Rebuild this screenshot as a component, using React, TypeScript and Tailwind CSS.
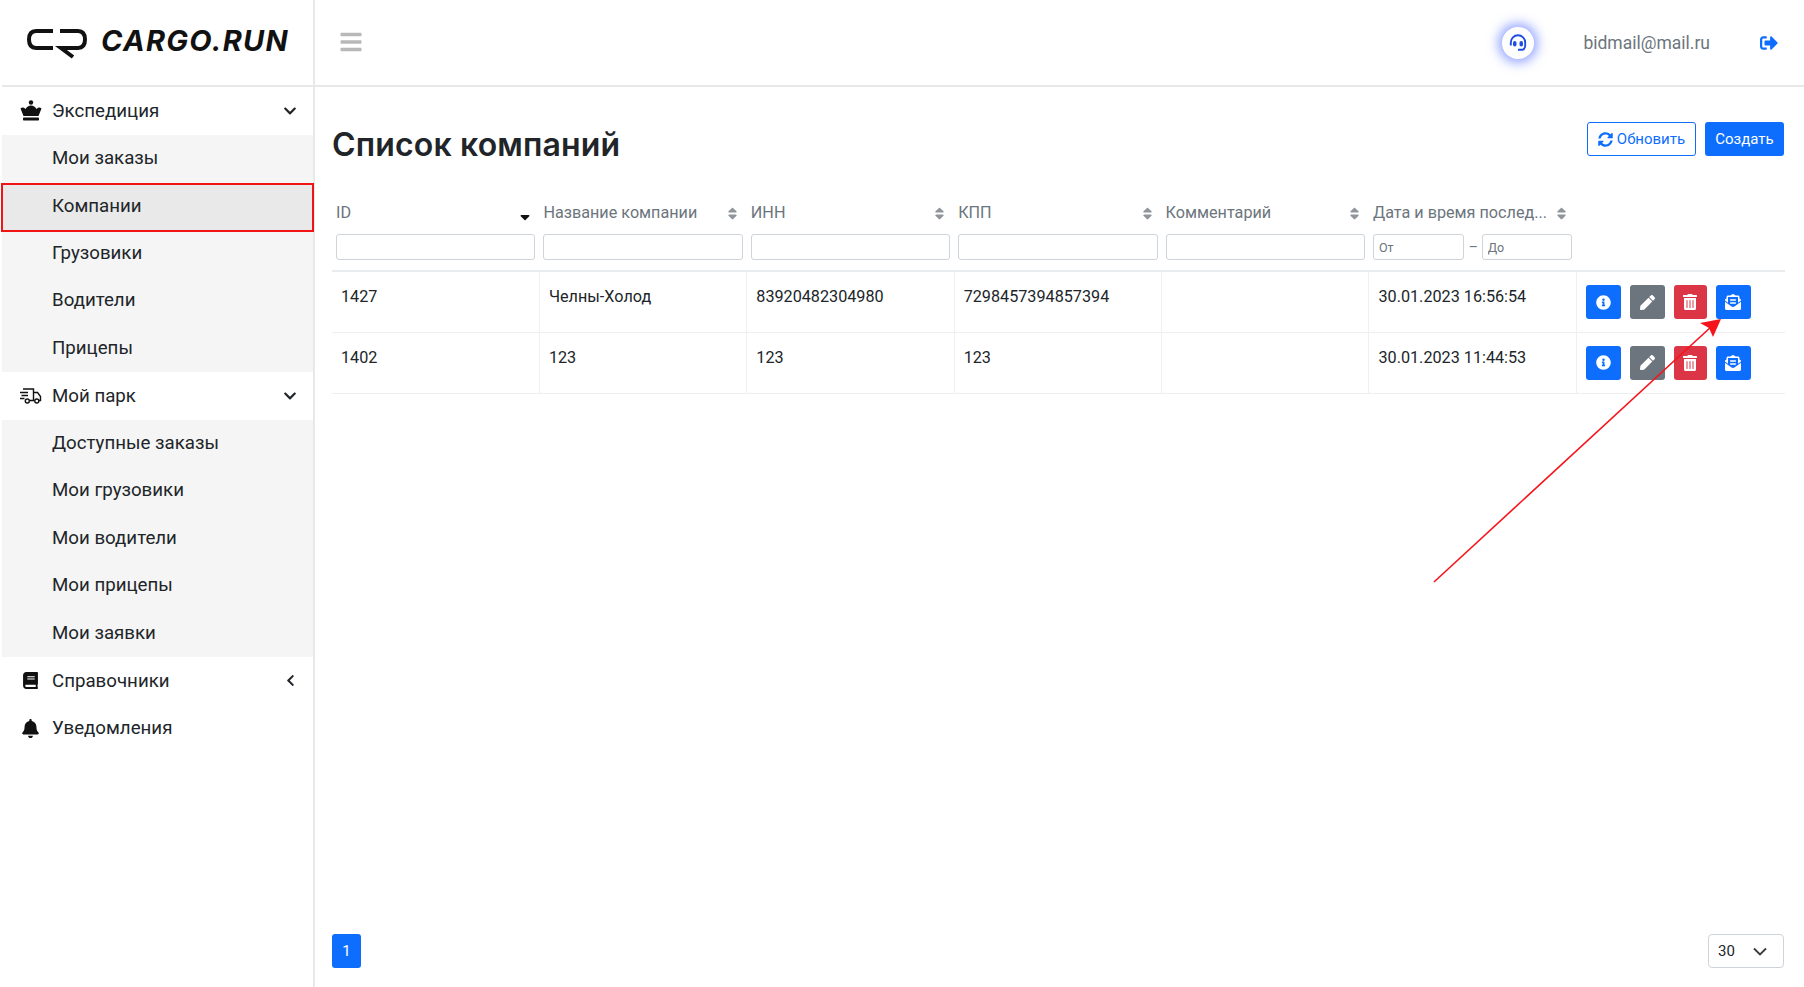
import React from "react";
import {
  FaBars, FaBell, FaBook, FaChevronDown, FaChevronLeft, FaEnvelopeOpenText, FaInfoCircle,
  FaPen, FaSignOutAlt, FaSort, FaSortDown, FaSyncAlt, FaTrashAlt,
} from "react-icons/fa";

const Logo = () => (
  <div className="flex items-center">
    <svg width="60" height="30" viewBox="0 0 60 30" fill="none" stroke="#111" strokeWidth="4" className="mt-[7px]">
      <path d="M26 2H9Q2 2 2 10.500 2 19 9 19H26" />
      <path d="M33 2H51Q58 2 58 10.500 58 19 51 19H34L46 28" />
    </svg>
    <span className="ml-[14px] text-[29px] leading-none font-bold italic text-[#111] font-['Inter'] tracking-[1.300px]">CARGO.RUN</span>
  </div>
);

const Crown = () => (
  <svg width="22" height="21" viewBox="0 0 22 21" fill="#111">
    <circle cx="11" cy="2.500" r="2.200" />
    <path d="M0.500 8.500Q3 6.500 5.500 9 7.500 5.500 11 5.500 14.500 5.500 16.500 9 19 6.500 21.500 8.500L18.500 16H3.500Z" />
    <rect x="3" y="17.500" width="16" height="3" rx="0.800" />
  </svg>
);

const Truck = () => (
  <svg width="22" height="16" viewBox="0 0 22 16" fill="none" stroke="#111" strokeWidth="1.400">
    <path d="M3 1H13.500V12.500H9.500M13.500 4.500H17.500L20.500 8.500V12.500H19M13.500 12.500H14.500" />
    <path d="M0 4.500H8M1.500 7.500H8M0 10.500H4.500" />
    <circle cx="7.300" cy="13" r="2" />
    <circle cx="16.800" cy="13" r="2" />
  </svg>
);

const Headset = () => (
  <svg width="18" height="18" viewBox="0 0 18 18" fill="none">
    <path d="M1.800 11.500V8.500A7.200 7.200 0 0 1 16.200 8.500V11.500Q16.200 15.800 12 15.800H9" stroke="#1f4fe0" strokeWidth="1.900" />
    <rect x="4" y="7" width="3.500" height="5.500" rx="1.700" fill="#1f4fe0" />
    <rect x="10.500" y="7" width="3.500" height="5.500" rx="1.700" fill="#1f4fe0" />
  </svg>
);

const MenuHead = ({ icon, label, chevron }: { icon: React.ReactNode; label: string; chevron?: "down" | "left" }) => (
  <div className="h-[47.500px] flex items-center text-[18.700px] text-[#212529]">
    <span className="w-[50px] pl-[18px] flex items-center">{icon}</span>
    <span className="flex-1">{label}</span>
    {chevron === "down" && <FaChevronDown className="mr-[16px] text-[14px] text-[#212529]" />}
    {chevron === "left" && <FaChevronLeft className="mr-[16px] text-[13px] text-[#212529]" />}
  </div>
);

const SubItem = ({ label, active }: { label: string; active?: boolean }) => (
  <div className={"h-[47.500px] relative flex items-center pl-[50px] text-[18.700px] text-[#212529] " + (active ? "" : "pb-[1px]")}>
    {active && <span className="absolute top-[1px] -bottom-[2px] -left-[1px] -right-[1px] border-2 border-[#f01414] bg-[#e9e9e9]" />}
    <span className="relative">{label}</span>
  </div>
);

const Sidebar = () => (
  <aside className="w-[315px] shrink-0 pl-[2px] border-r-2 border-[#e8e8e8] flex flex-col">
    <div className="h-[87px] shrink-0 border-b-2 border-[#e8e8e8] flex items-center pl-[25px] pb-[4px]">
      <Logo />
    </div>
    <MenuHead icon={<Crown />} label="Экспедиция" chevron="down" />
    <div className="bg-[#f5f5f5]">
      <SubItem label="Мои заказы" />
      <SubItem label="Компании" active />
      <SubItem label="Грузовики" />
      <SubItem label="Водители" />
      <SubItem label="Прицепы" />
    </div>
    <MenuHead icon={<Truck />} label="Мой парк" chevron="down" />
    <div className="bg-[#f5f5f5]">
      <SubItem label="Доступные заказы" />
      <SubItem label="Мои грузовики" />
      <SubItem label="Мои водители" />
      <SubItem label="Мои прицепы" />
      <SubItem label="Мои заявки" />
    </div>
    <MenuHead icon={<FaBook className="text-[17px] text-[#111] ml-[2px]" />} label="Справочники" chevron="left" />
    <MenuHead icon={<FaBell className="text-[19px] text-[#111] ml-[1px]" />} label="Уведомления" />
  </aside>
);

const Topbar = () => (
  <header className="h-[87px] shrink-0 border-b-2 border-[#e8e8e8] flex items-center pl-[24px] pr-[26px]">
    <FaBars className="text-[24px] text-[#b8b8b8] -mt-[2px]" />
    <div className="flex-1" />
    <div className="w-[32px] h-[32px] rounded-full bg-white shadow-[0_0_11px_4px_rgba(70,100,255,0.55)] flex items-center justify-center">
      <Headset />
    </div>
    <span className="ml-[49px] mt-[2px] text-[17.500px] text-[#6c757d]">bidmail@mail.ru</span>
    <FaSignOutAlt className="ml-[50px] text-[18px] text-[#0d6efd]" />
  </header>
);

const Sort = ({ active }: { active?: boolean }) =>
  active ? (
    <FaSortDown className="text-[16px] text-[#111] mr-[1px] mt-[1px] shrink-0" />
  ) : (
    <FaSort className="text-[15px] text-[#8f959a] mr-[2px] shrink-0" />
  );

const inputCls = "block w-full h-[26px] border border-[#ced4da] rounded-[3px] bg-white";

const columns = ["ID", "Название компании", "ИНН", "КПП", "Комментарий", "Дата и время послед..."];

const rows = [
  ["1427", "Челны-Холод", "83920482304980", "7298457394857394", "", "30.01.2023 16:56:54"],
  ["1402", "123", "123", "123", "", "30.01.2023 11:44:53"],
];

const ActionBtn = ({ cls, children }: { cls: string; children: React.ReactNode }) => (
  <button className={"h-[34px] rounded-[3px] flex items-center justify-center text-white " + cls}>{children}</button>
);

const Actions = () => (
  <div className="flex">
    <ActionBtn cls="w-[35px] bg-[#0d6efd]"><FaInfoCircle className="text-[15px]" /></ActionBtn>
    <ActionBtn cls="w-[35px] ml-[9px] bg-[#6c757d]"><FaPen className="text-[15px]" /></ActionBtn>
    <ActionBtn cls="w-[33px] ml-[9px] bg-[#dc3545]"><FaTrashAlt className="text-[16px]" /></ActionBtn>
    <ActionBtn cls="w-[35px] ml-[9px] bg-[#0d6efd]"><FaEnvelopeOpenText className="text-[16px]" /></ActionBtn>
  </div>
);

const CompanyTable = () => (
  <table className="mt-[40px] w-[1453px] table-fixed border-collapse text-[16.200px]">
    <thead>
      <tr className="border-b-2 border-[#e9ecef]">
        {columns.map((c, i) => (
          <th key={c} className="w-[207.400px] px-[4px] pb-[10px] align-top font-normal text-left">
            <div className="h-[24px] flex items-center justify-between text-[#6c757d] whitespace-nowrap mb-[9px]">
              <span>{c}</span>
              <span className="pr-[1px]"><Sort active={i === 0} /></span>
            </div>
            {i < 5 ? (
              <input className={inputCls} />
            ) : (
              <div className="flex items-center">
                <input placeholder="От" className={inputCls + " w-[92px] pl-[5px] text-[12.500px] placeholder:text-[#6c757d]"} />
                <span className="mx-[5px] w-[8px] text-[#6c757d] text-[14px] leading-none">–</span>
                <input placeholder="До" className={inputCls + " w-[91px] pl-[5px] text-[12.500px] placeholder:text-[#6c757d]"} />
              </div>
            )}
          </th>
        ))}
        <th />
      </tr>
    </thead>
    <tbody>
      {rows.map((r) => (
        <tr key={r[0]} className="border-b border-[#eeeeee]">
          {r.map((v, i) => (
            <td key={i} className="h-[61px] px-[9px] pt-[13px] align-top text-[#212529] border-r border-[#f0f0f0] whitespace-nowrap">
              {v}
            </td>
          ))}
          <td className="pl-[9px] pt-[13px] align-top">
            <Actions />
          </td>
        </tr>
      ))}
    </tbody>
  </table>
);

const Arrow = () => (
  <svg className="absolute left-0 top-0 pointer-events-none" width="1804" height="987" viewBox="0 0 1804 987">
    <line x1="1434" y1="582" x2="1712" y2="326" stroke="#f5141c" strokeWidth="1.600" />
    <path d="M1721 319 L1700 323 L1709 328 L1713 337 Z" fill="#f5141c" />
  </svg>
);

export default function App() {
  return (
    <div className="relative w-[1804px] h-[987px] flex overflow-hidden bg-white font-['Roboto',sans-serif]">
      <Sidebar />
      <div className="flex-1 min-w-0 flex flex-col">
        <Topbar />
        <main className="flex-1 pl-[17px] pr-[20px] flex flex-col">
          <div className="flex items-start justify-between pt-[35px]">
            <h1 className="mt-[6px] text-[32px] leading-[33px] font-semibold text-[#212529] font-['Inter',sans-serif] tracking-[0.150px]">Список компаний</h1>
            <div className="flex gap-[9px] text-[15px]">
              <button className="h-[34px] w-[109px] border border-[#0d6efd] rounded-[3px] text-[#0d6efd] flex items-center justify-center gap-[4px] bg-white">
                <FaSyncAlt className="text-[15px]" />Обновить
              </button>
              <button className="h-[34px] w-[79px] rounded-[3px] bg-[#0d6efd] text-white">Создать</button>
            </div>
          </div>
          <CompanyTable />
          <div className="mt-auto mb-[19px] flex items-center justify-between">
            <button className="w-[29px] h-[34px] rounded-[3px] bg-[#0d6efd] text-white text-[15px]">1</button>
            <div className="w-[76px] h-[34px] border border-[#ced4da] rounded-[4px] flex items-center pl-[9px] text-[15px] text-[#212529]">
              30
              <svg className="ml-[18px]" width="14" height="9" viewBox="0 0 14 9" fill="none" stroke="#343a40" strokeWidth="1.800">
                <path d="M1 1.500 7 7.500 13 1.500" />
              </svg>
            </div>
          </div>
        </main>
      </div>
      <Arrow />
    </div>
  );
}
